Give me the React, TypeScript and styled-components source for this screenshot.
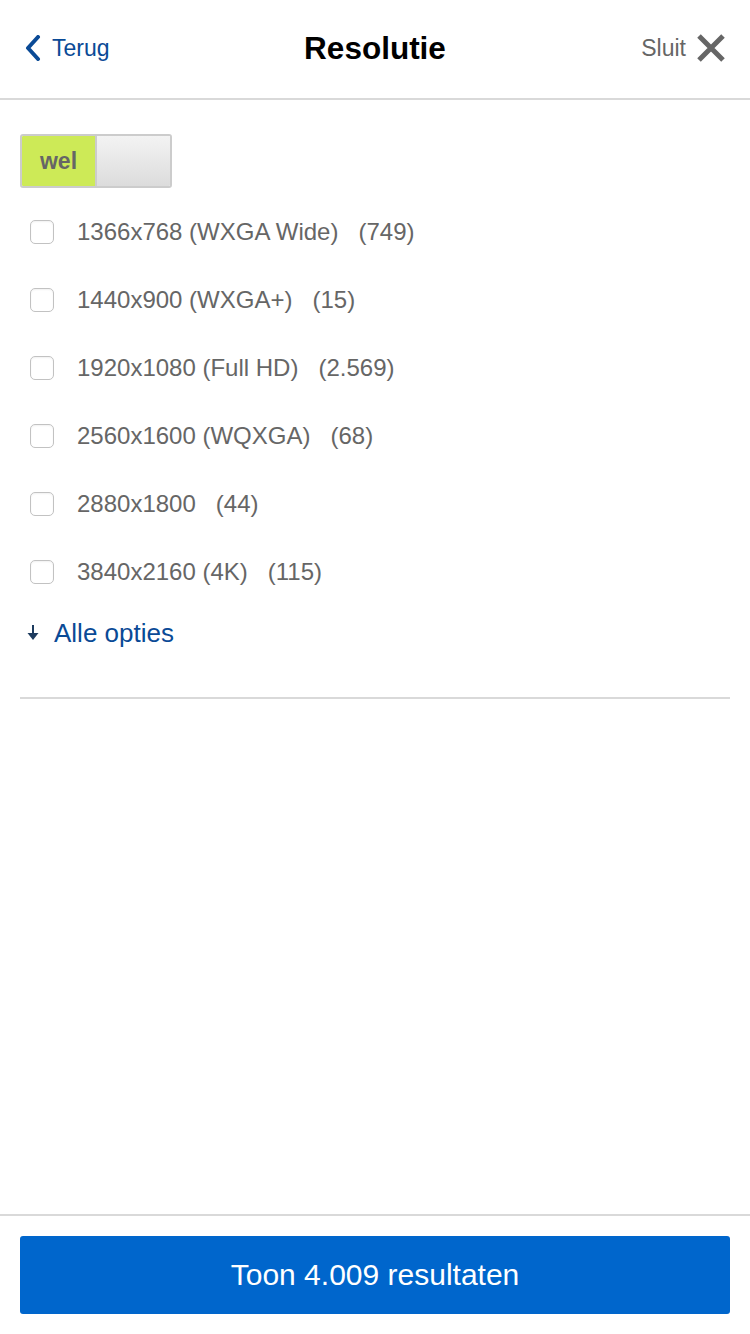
import React, { useState } from 'react';
import styled, { createGlobalStyle } from 'styled-components';

const GlobalStyle = createGlobalStyle`
	html, body {
		margin: 0;
		padding: 0;
		background: #fff;
		font-family: 'Liberation Sans', Arial, sans-serif;
	}
	* {
		box-sizing: border-box;
	}
`;

const options = [
	{ label: '1366x768 (WXGA Wide)', count: '749' },
	{ label: '1440x900 (WXGA+)', count: '15' },
	{ label: '1920x1080 (Full HD)', count: '2.569' },
	{ label: '2560x1600 (WQXGA)', count: '68' },
	{ label: '2880x1800', count: '44' },
	{ label: '3840x2160 (4K)', count: '115' },
];

const App = () => {
	const [checked, setChecked] = useState<Record<string, boolean>>({});
	const toggle = (key: string) => setChecked((prev) => ({ ...prev, [key]: !prev[key] }));

	return (
		<Page>
			<GlobalStyle />
			<Header>
				<BackLink>
					<svg width="18" height="26" viewBox="0 0 18 26">
						<path d="M14 2 L4 13 L14 24" fill="none" stroke="#0a4a96" strokeWidth="4" strokeLinecap="round" strokeLinejoin="round" />
					</svg>
					Terug
				</BackLink>
				<Title>Resolutie</Title>
				<CloseLink>
					Sluit
					<svg width="30" height="30" viewBox="0 0 30 30">
						<path d="M3 3 L27 27 M27 3 L3 27" fill="none" stroke="#666" strokeWidth="5" />
					</svg>
				</CloseLink>
			</Header>

			<Content>
				<Switch>
					<SwitchHalf active>wel</SwitchHalf>
					<SwitchHalf />
				</Switch>

				<OptionList>
					{options.map((o) => (
						<OptionRow key={o.label} onClick={() => toggle(o.label)}>
							<Checkbox checked={!!checked[o.label]} />
							<OptionLabel>{o.label}</OptionLabel>
							<OptionCount>({o.count})</OptionCount>
						</OptionRow>
					))}
				</OptionList>

				<MoreLink>
					<svg width="14" height="18" viewBox="0 0 14 18">
						<path d="M7 1 L7 11" stroke="#1d3b5e" strokeWidth="2" />
						<path d="M1.5 9 L12.5 9 L7 16 Z" fill="#1d3b5e" />
					</svg>
					Alle opties
				</MoreLink>

				<Divider />
			</Content>

			<Footer>
				<SubmitButton>Toon 4.009 resultaten</SubmitButton>
			</Footer>
		</Page>
	);
};

export default App;

const Page = styled.div`
	min-height: 100vh;
	display: flex;
	flex-direction: column;
`;

const Header = styled.header`
	height: 100px;
	border-bottom: 2px solid #d9d9d9;
	display: grid;
	grid-template-columns: 1fr auto 1fr;
	align-items: center;
	padding: 0 24px 2px 24px;
`;

const BackLink = styled.a`
	display: flex;
	align-items: center;
	gap: 10px;
	color: #0a4a96;
	font-size: 23px;
	cursor: pointer;
	justify-self: start;
`;

const Title = styled.h1`
	margin: 0;
	font-size: 31.5px;
	font-weight: bold;
	color: #000;
`;

const CloseLink = styled.a`
	display: flex;
	align-items: center;
	gap: 10px;
	color: #666;
	font-size: 23px;
	cursor: pointer;
	justify-self: end;
`;

const Content = styled.main`
	flex: 1;
	padding: 34px 20px 0 20px;
`;

const Switch = styled.div`
	display: flex;
	width: 152px;
	height: 54px;
	border: 2px solid #cccccc;
	border-radius: 3px;
	overflow: hidden;
`;

const SwitchHalf = styled.div<{ active?: boolean }>`
	flex: 1;
	display: flex;
	align-items: center;
	justify-content: center;
	font-size: 23px;
	font-weight: bold;
	color: #666;
	background: ${(p) => (p.active ? '#cdea57' : 'linear-gradient(#f3f3f3, #dcdcdc)')};
	& + & {
		border-left: 2px solid #cccccc;
	}
`;

const OptionList = styled.ul`
	list-style: none;
	margin: 10px 0 0 0;
	padding: 0;
`;

const OptionRow = styled.li`
	height: 68px;
	display: flex;
	align-items: center;
	padding-left: 10px;
	cursor: pointer;
`;

const Checkbox = styled.span<{ checked: boolean }>`
	width: 24px;
	height: 24px;
	border: 1px solid #c2c2c2;
	border-radius: 5px;
	background: ${(p) => (p.checked ? '#0066cc' : '#fff')};
	box-shadow: inset 0 1px 2px rgba(0, 0, 0, 0.06);
	margin-right: 23px;
	flex-shrink: 0;
`;

const OptionLabel = styled.span`
	font-size: 24px;
	color: #666;
`;

const OptionCount = styled.span`
	font-size: 24px;
	color: #666;
	margin-left: 20px;
`;

const MoreLink = styled.a`
	height: 54px;
	display: flex;
	align-items: center;
	gap: 14px;
	padding-left: 6px;
	color: #0a4a96;
	font-size: 26px;
	cursor: pointer;
`;

const Divider = styled.hr`
	margin: 37px 0 0 0;
	border: none;
	border-top: 2px solid #d9d9d9;
`;

const Footer = styled.footer`
	border-top: 2px solid #d9d9d9;
	padding: 20px 20px 20px 20px;
`;

const SubmitButton = styled.button`
	width: 100%;
	height: 78px;
	border: none;
	border-radius: 3px;
	background: #0066cc;
	color: #fff;
	font-family: 'Liberation Sans', Arial, sans-serif;
	font-size: 30px;
	cursor: pointer;
`;
